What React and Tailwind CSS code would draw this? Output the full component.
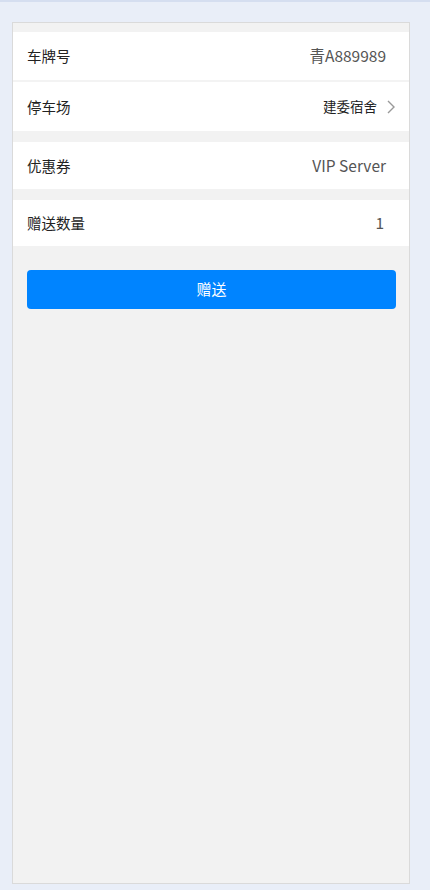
export default function App() {
  const font = { fontFamily: '"Noto Sans CJK SC", "Noto Sans", sans-serif' };

  return (
    <div
      className="min-h-screen h-[890px] bg-[#e9eef8] pl-3 pr-5 pt-5 pb-[6px] border-t-2 border-[#d5def0] flex"
      style={font}
    >
      {/* Card */}
      <div className="flex-1 bg-[#f2f2f2] border border-[#dadada] pt-[9px] flex flex-col">
        {/* 车牌号 / 停车场 */}
        <div className="bg-white">
          <div className="h-12 flex items-center justify-between pl-[14px] pr-[23px]">
            <span className="text-[14.5px] text-[#222]">车牌号</span>
            <span className="text-[15.5px] text-[#555]">青A889989</span>
          </div>
          <div className="h-[2px] bg-[#f3f3f3]" />
          <div className="h-[49px] flex items-center justify-between pl-[14px] pr-[14px]">
            <span className="text-[14.5px] text-[#222]">停车场</span>
            <span className="flex items-center gap-[10px]">
              <span className="text-[13.5px] text-[#222]">建委宿舍</span>
              <svg width="8" height="14" viewBox="0 0 8 14" fill="none">
                <path d="M1 1l6 6-6 6" stroke="#999" strokeWidth="1.4" />
              </svg>
            </span>
          </div>
        </div>

        {/* 优惠券 */}
        <div className="mt-[11px] bg-white h-[47px] flex items-center justify-between pl-[14px] pr-[23px]">
          <span className="text-[14.5px] text-[#222]">优惠券</span>
          <span className="text-[15.5px] text-[#555]">VIP Server</span>
        </div>

        {/* 赠送数量 */}
        <div className="mt-[11px] bg-white h-[46px] flex items-center justify-between pl-[14px] pr-[25px]">
          <span className="text-[14.5px] text-[#222]">赠送数量</span>
          <span className="text-[15.5px] text-[#555]">1</span>
        </div>

        <div className="pl-[14px] pr-[13px] mt-6">
          <button className="w-full h-[39px] rounded-[4px] bg-[#0084ff] text-white text-[15px]">
            赠送
          </button>
        </div>
      </div>
    </div>
  );
}
